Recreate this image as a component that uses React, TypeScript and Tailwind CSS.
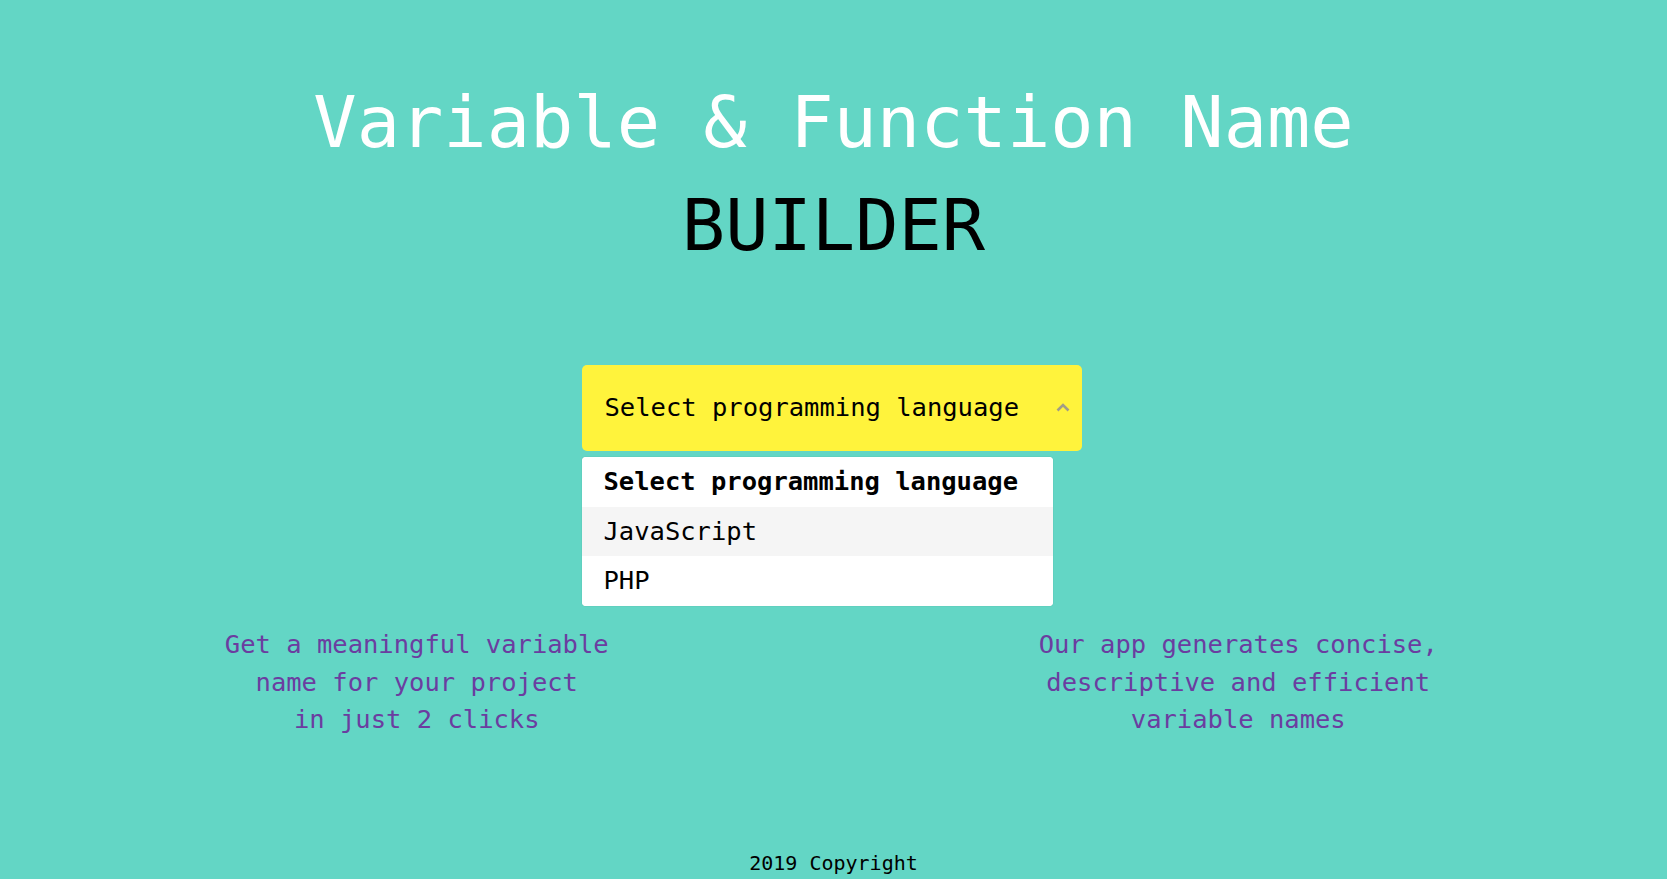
import { useState } from 'react';

const options = ['Select programming language', 'JavaScript', 'PHP'];

export default function App() {
  const [open] = useState(true);
  const [hovered, setHovered] = useState(1);

  return (
    <div
      className="min-h-screen w-full bg-[#63d6c5] text-black"
      style={{ fontFamily: '"DejaVu Sans Mono", "Liberation Mono", monospace' }}
    >
      {/* Heading */}
      <h1 className="pt-[71px] text-center text-[72px] font-normal leading-[103px]">
        <span className="block text-white">Variable &amp; Function Name</span>
        <span className="block text-black">BUILDER</span>
      </h1>

      {/* Select */}
      <div className="relative -left-[2px] mx-auto mt-[88px] w-[500px]">
        <button
          type="button"
          className="flex h-[86px] w-full items-center justify-between rounded-[5px] bg-[#fff33c] pl-[23px] pr-[12px] text-left text-[25.5px] leading-none text-black"
        >
          <span>Select programming language</span>
          <svg width="14" height="9" viewBox="0 0 14 9" className="mb-[2px]">
            <polyline points="1.5,7.5 7,2 12.5,7.5" fill="none" stroke="#a19d86" strokeWidth="2.6" />
          </svg>
        </button>

        {open && (
          <ul className="absolute left-0 top-[92px] z-10 w-[471px] overflow-hidden rounded-[4px] bg-white shadow-[0_0_1px_rgba(0,0,0,0.3)]">
            {options.map((opt, i) => (
              <li
                key={opt}
                onMouseEnter={() => setHovered(i)}
                className={`flex h-[49.6px] items-center px-[22px] text-[25.5px] leading-none text-black ${
                  i === 0 ? 'font-bold' : ''
                } ${i === hovered ? 'bg-[#f5f5f5]' : 'bg-white'}`}
              >
                {opt}
              </li>
            ))}
          </ul>
        )}
      </div>

      {/* Features */}
      <div className="mt-[175px] grid grid-cols-2 text-center text-[25.5px] leading-[37.5px] text-[#6b3da0]">
        <p>
          Get a meaningful variable
          <br />
          name for your project
          <br />
          in just 2 clicks
        </p>
        <p className="pr-[24px]">
          Our app generates concise,
          <br />
          descriptive and efficient
          <br />
          variable names
        </p>
      </div>

      {/* Footer */}
      <footer className="mt-[110px] text-center text-[20px] leading-[28px] text-black">
        2019 Copyright
      </footer>
    </div>
  );
}
